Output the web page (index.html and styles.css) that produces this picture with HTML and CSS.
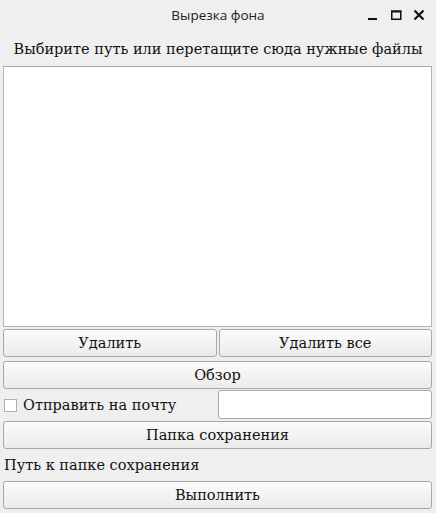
FILE: index.html
```html
<!DOCTYPE html>
<html lang="ru">
<head>
<meta charset="utf-8">
<link rel="stylesheet" href="styles.css">
</head>
<body>
<div class="window">
  <div class="titlebar">
    <span class="title">Вырезка фона</span>
    <div class="controls">
      <svg width="12" height="12" viewBox="0 0 12 12"><rect x="1" y="9" width="9" height="2" fill="#111"/></svg>
      <svg width="12" height="12" viewBox="0 0 12 12"><rect x="1.75" y="2.25" width="9" height="8" fill="none" stroke="#111" stroke-width="1.5"/><rect x="1" y="1.5" width="10.5" height="2" fill="#111"/></svg>
      <svg width="12" height="12" viewBox="0 0 12 12"><path d="M1.5 1.5 L10.5 10.5 M10.5 1.5 L1.5 10.5" stroke="#111" stroke-width="2.2"/></svg>
    </div>
  </div>
  <div class="content">
    <div class="hint">Выбирите путь или перетащите сюда нужные файлы</div>
    <div class="listbox"></div>
    <div class="row two">
      <button class="btn">Удалить</button>
      <button class="btn">Удалить все</button>
    </div>
    <button class="btn">Обзор</button>
    <div class="row mail">
      <label class="check"><span class="box"></span>Отправить на почту</label>
      <input class="field" type="text">
    </div>
    <button class="btn">Папка сохранения</button>
    <div class="path">Путь к папке сохранения</div>
    <button class="btn">Выполнить</button>
  </div>
</div>
</body>
</html>
```
FILE: styles.css
```css
* { box-sizing: border-box; }
html, body { margin: 0; padding: 0; }
body {
  width: 436px;
  height: 513px;
  background: #efefef;
  font-family: "DejaVu Serif", serif;
  font-size: 14.5px;
  color: #111;
  overflow: hidden;
}
.window { display: flex; flex-direction: column; height: 513px; }
.titlebar {
  height: 32px;
  position: relative;
  display: flex;
  align-items: center;
  justify-content: center;
}
.title {
  font-family: "Open Sans", sans-serif;
  font-size: 13.5px;
  color: #222;
  margin-top: -3px;
}
.controls {
  position: absolute;
  right: 11px;
  top: 9px;
  display: flex;
  gap: 11px;
}
.content {
  display: flex;
  flex-direction: column;
  padding: 0 4px 0 3px;
}
.hint {
  text-align: center;
  height: 34px;
  line-height: 34px;
  padding-left: 1px;
}
.listbox {
  height: 261px;
  background: #fff;
  border: 1px solid #b4b4b4;
  border-top-color: #a9a9a9;
}
.btn {
  font-family: "DejaVu Serif", serif;
  font-size: 14.5px;
  color: #111;
  height: 28px;
  padding: 0;
  border: 1px solid #a8a8a8;
  border-radius: 3px;
  background: linear-gradient(#fbfbfb, #ebebeb);
  width: 100%;
}
.row { display: flex; }
.two { gap: 2px; margin: 2px 0 4px; }
.two .btn { flex: 1; }
.mail {
  align-items: center;
  height: 29px;
  margin: 1px 0 2px;
  gap: 2px;
}
.check {
  flex: 1;
  display: flex;
  align-items: center;
  gap: 6px;
  margin-left: 1px;
  margin-top: 1px;
}
.box {
  width: 13px;
  height: 13px;
  background: #fff;
  border: 1px solid #b0b0b0;
  display: inline-block;
}
.field {
  width: 214px;
  height: 29px;
  border: 1px solid #a8a8a8;
  border-radius: 3px;
  background: #fff;
}
.path {
  height: 32px;
  line-height: 32px;
  padding-left: 1px;
}
```
